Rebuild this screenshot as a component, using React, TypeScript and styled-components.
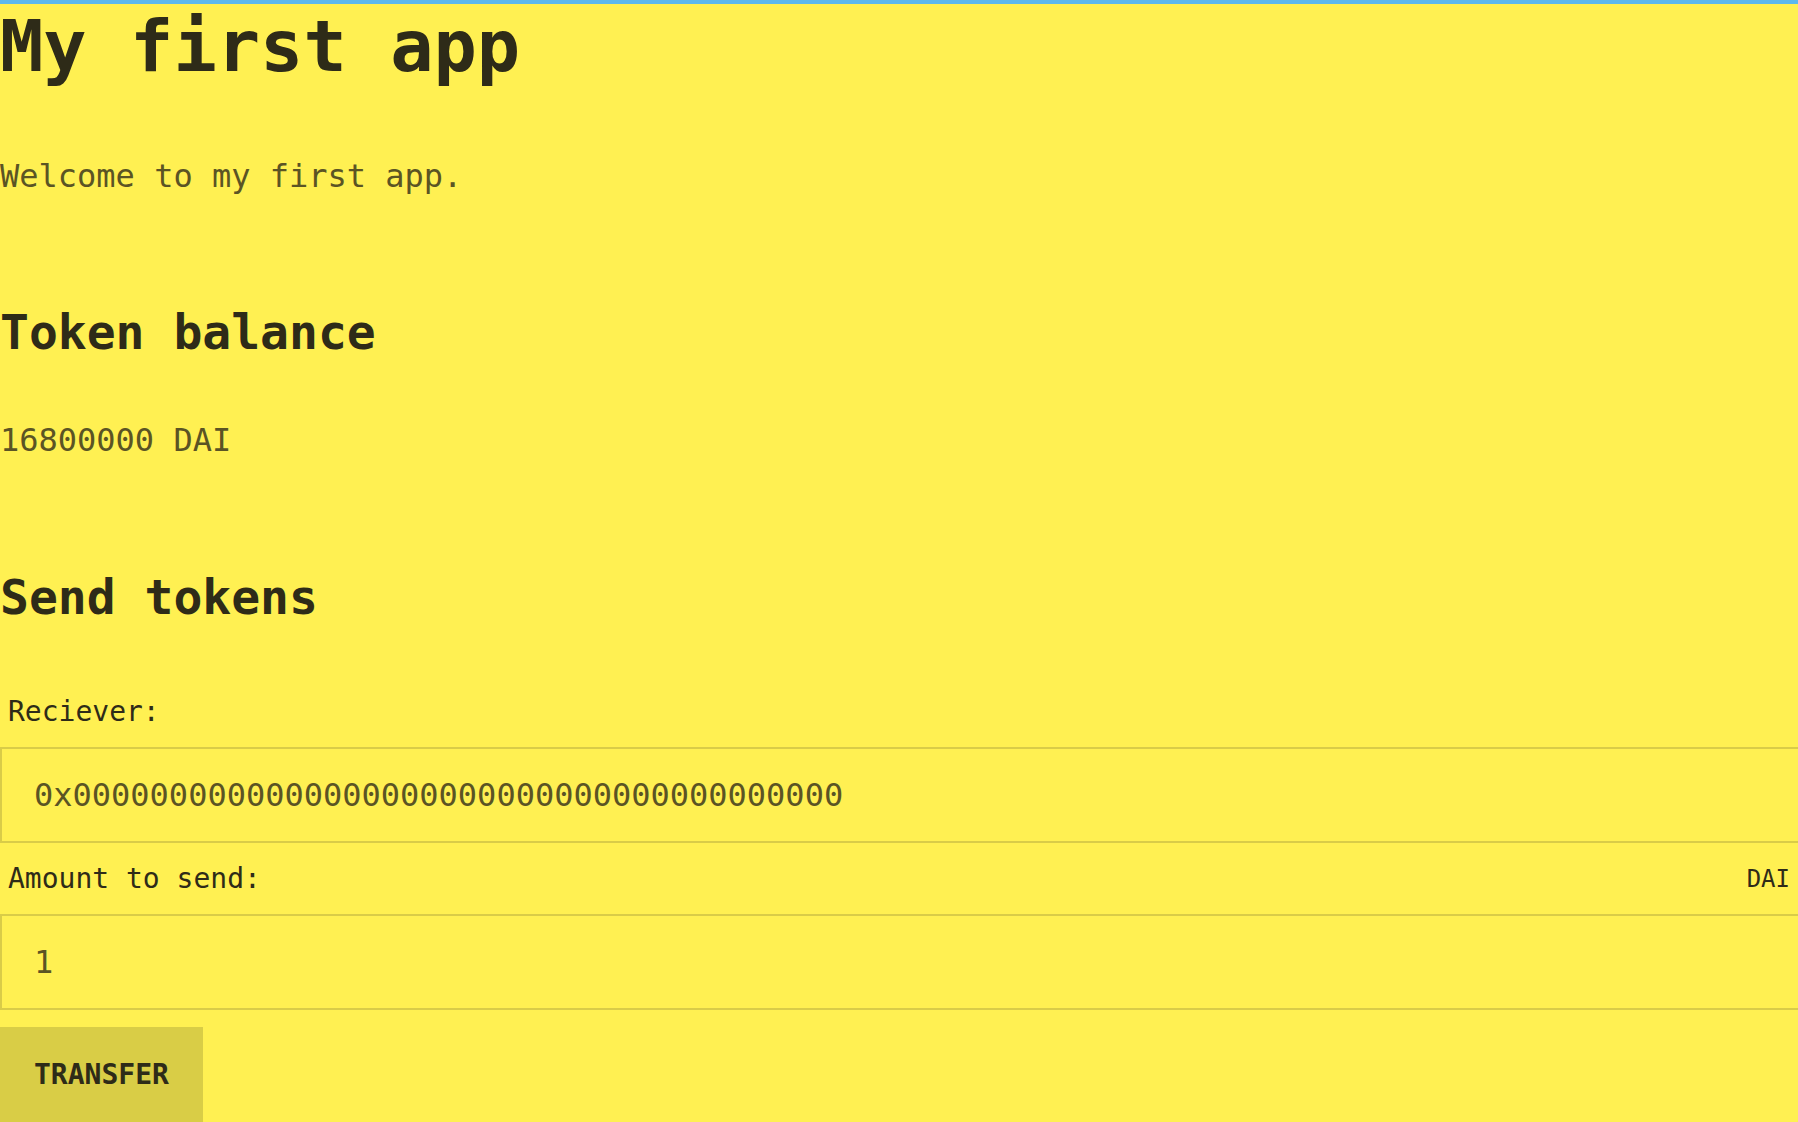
import React from "react";
import styled, { createGlobalStyle } from "styled-components";

const Global = createGlobalStyle`
  html, body {
    margin: 0;
    padding: 0;
    background: #fff052;
    overflow-x: hidden;
  }
  body {
    font-family: "DejaVu Sans Mono", "Liberation Mono", monospace;
  }
  * { box-sizing: border-box; }
`;

const Page = styled.div`
  min-height: 1122px;
  background: #fff052;
  border-top: 4px solid #5cb8ee;
  color: #2e2b18;
  font-family: "DejaVu Sans Mono", "Liberation Mono", monospace;
  overflow: hidden;
`;

const Title = styled.h1`
  margin: 0 0 69px;
  font-size: 72px;
  line-height: normal;
  font-weight: 700;
  color: #2e2b18;
`;

const Heading = styled.h2<{ $gap: number }>`
  margin: 0 0 ${(p) => p.$gap}px;
  font-size: 48px;
  line-height: normal;
  font-weight: 700;
  color: #2e2b18;
`;

const Text = styled.p<{ $gap: number }>`
  margin: 0 0 ${(p) => p.$gap}px;
  font-size: 32px;
  line-height: normal;
  color: #5b5424;
`;

const Form = styled.form`
  display: flex;
  flex-direction: column;
`;

const LabelRow = styled.label`
  display: flex;
  justify-content: space-between;
  align-items: center;
  padding: 19px 8px 19px;
  font-size: 28px;
  line-height: normal;
  color: #2e2b18;
`;

const Unit = styled.span`
  font-size: 24px;
`;

const Field = styled.input`
  display: block;
  width: 100%;
  height: 96px;
  margin: 0;
  padding: 0 32px;
  border: 2px solid #d9cc48;
  border-right: none;
  background: #fff052;
  font-family: "DejaVu Sans Mono", "Liberation Mono", monospace;
  font-size: 32px;
  line-height: normal;
  color: #5b5424;
  outline: none;
  border-radius: 0;
`;

const Button = styled.button`
  align-self: flex-start;
  margin-top: 17px;
  padding: 31px 34px;
  border: none;
  border-radius: 0;
  background: #d9cd46;
  font-family: "DejaVu Sans Mono", "Liberation Mono", monospace;
  font-size: 28px;
  font-weight: 700;
  line-height: normal;
  color: #2e2b18;
  text-transform: uppercase;
  cursor: pointer;
`;

export default function App() {
  return (
    <>
      <Global />
      <Page>
        <Title>My first app</Title>
        <Text $gap={109}>Welcome to my first app.</Text>
        <Heading $gap={61}>Token balance</Heading>
        <Text $gap={110}>16800000 DAI</Text>
        <Heading $gap={51}>Send tokens</Heading>
        <Form onSubmit={(e) => e.preventDefault()}>
          <LabelRow htmlFor="receiver">
            <span>Reciever:</span>
          </LabelRow>
          <Field
            id="receiver"
            type="text"
            defaultValue="0x0000000000000000000000000000000000000000"
          />
          <LabelRow htmlFor="amount">
            <span>Amount to send:</span>
            <Unit>DAI</Unit>
          </LabelRow>
          <Field id="amount" type="text" defaultValue="1" />
          <Button type="submit">Transfer</Button>
        </Form>
      </Page>
    </>
  );
}
